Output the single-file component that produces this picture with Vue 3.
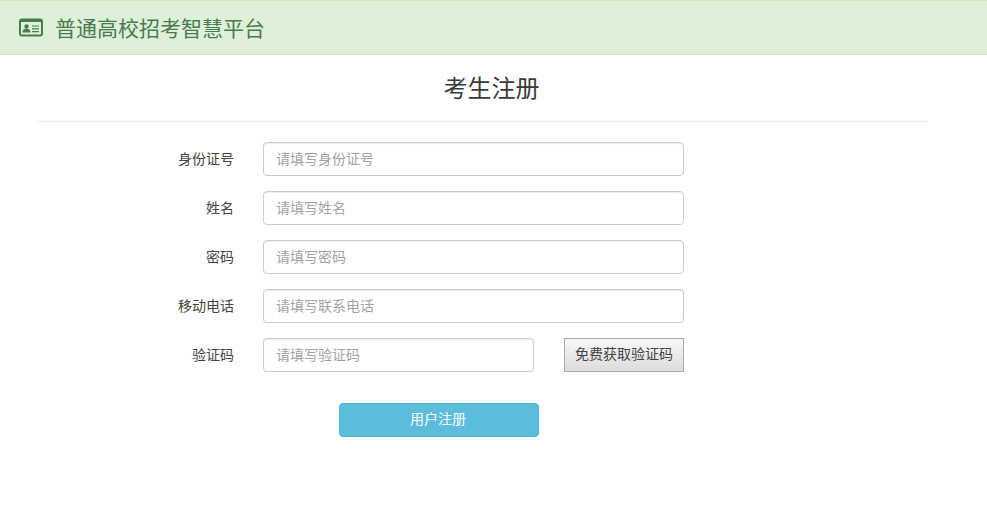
<script setup>
const fields = [
  { label: '身份证号', ph: '请填写身份证号' },
  { label: '姓名', ph: '请填写姓名' },
  { label: '密码', ph: '请填写密码' },
  { label: '移动电话', ph: '请填写联系电话' },
]
</script>

<template>
  <div class="page">
    <header class="bar">
      <svg class="icon" width="24" height="19" viewBox="0 0 24 19">
        <rect x="1" y="1.5" width="22" height="16" rx="2" fill="none" stroke="#4a7a50" stroke-width="2"/>
        <rect x="1" y="1.5" width="22" height="2.5" fill="#4a7a50"/>
        <circle cx="7.500" cy="8.500" r="2.200" fill="#4a7a50"/>
        <path d="M3.500 14.500c0-2.800 1.500-3.800 4-3.800s4 1 4 3.800z" fill="#4a7a50"/>
        <path d="M13 8h7M13 10.800h7M13 13.600h7" stroke="#4a7a50" stroke-width="1.200"/>
      </svg>
      <span class="brand">普通高校招考智慧平台</span>
    </header>
    <h1 class="title">考生注册</h1>
    <form class="form" @submit.prevent>
      <div v-for="f in fields" :key="f.label" class="row">
        <label class="label">{{ f.label }}</label>
        <input class="input wide" :placeholder="f.ph" />
      </div>
      <div class="row">
        <label class="label">验证码</label>
        <input class="input short" placeholder="请填写验证码" />
        <button type="button" class="code">免费获取验证码</button>
      </div>
      <button type="button" class="submit">用户注册</button>
    </form>
  </div>
</template>

<style>
html, body { margin: 0; background: #fff; }
</style>

<style scoped>
.page {
  width: 987px;
  height: 510px;
  overflow: hidden;
  font-family: "Noto Sans CJK SC", "Liberation Sans", sans-serif;
  color: #333;
}
.bar {
  height: 55px;
  box-sizing: border-box;
  padding: 0 0 2px 19px;
  display: flex;
  align-items: center;
  background: #dff0d8;
  border-top: 1px solid #d6e9c6;
  border-bottom: 1px solid #d6e9c6;
}
.icon { margin: 2px 12px 0 0; }
.brand { font-size: 21px; color: #4a7a50; }
.title {
  margin: 0 37px 0;
  width: 891px;
  height: 67px;
  box-sizing: border-box;
  padding-left: 18px;
  border-bottom: 1px solid #eeeeee;
  text-align: center;
  font-size: 24px;
  font-weight: 400;
  line-height: 64px;
  color: #3a3a3a;
}
.form { margin-top: 20px; display: flex; flex-direction: column; }
.row { display: flex; align-items: center; height: 34px; margin-bottom: 15px; }
.label {
  width: 234px;
  box-sizing: border-box;
  padding: 0 0 2px;
  text-align: right;
  font-size: 14px;
  margin-right: 29px;
  color: #444;
}
.input {
  box-sizing: border-box;
  height: 34px;
  padding: 0 13px 2px 12px;
  border: 1px solid #ccc;
  border-radius: 4px;
  box-shadow: inset 0 1px 1px rgba(0,0,0,.075);
  font: inherit;
  font-size: 14px;
  color: #555;
  background: #fff;
}
.input::placeholder { color: #a3a3a3; opacity: 1; }
.wide { width: 421px; }
.short { width: 271px; }
.code {
  margin-left: 30px;
  width: 120px;
  height: 34px;
  padding: 0 0 4px;
  font: inherit;
  font-size: 14px;
  color: #444;
  border: 1px solid #aaa;
  background: linear-gradient(#f8f8f8, #dcdcdc);
}
.submit {
  align-self: flex-start;
  margin: 16px 0 0 339px;
  width: 200px;
  height: 34px;
  padding: 0 2px 4px 0;
  font: inherit;
  font-size: 14px;
  color: #fff;
  background: #5bbcdb;
  border: 1px solid #4fb3d3;
  border-radius: 4px;
}
</style>
